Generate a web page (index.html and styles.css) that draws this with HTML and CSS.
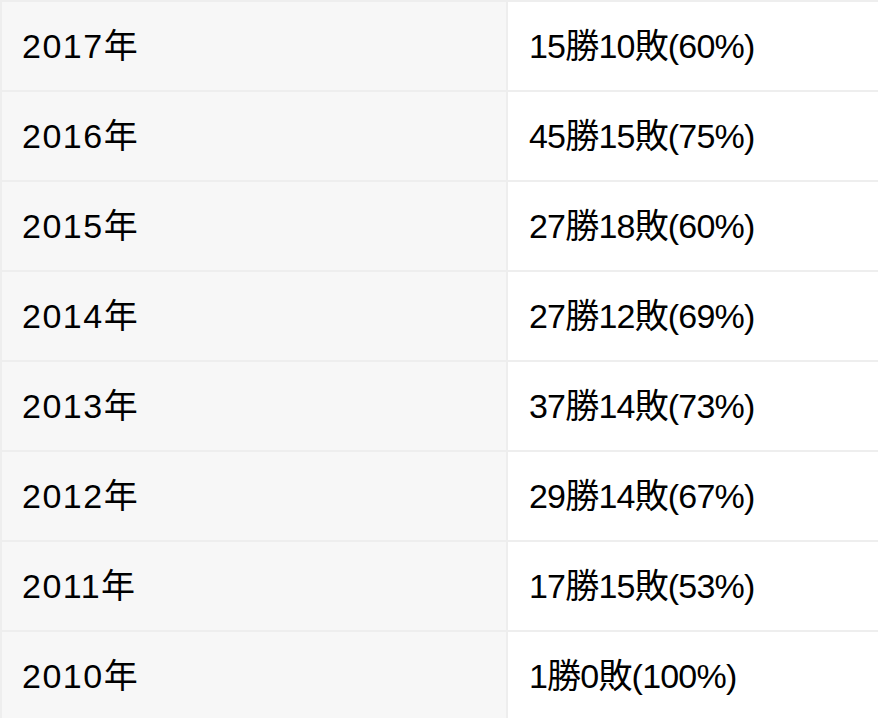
FILE: index.html
```html
<!DOCTYPE html>
<html lang="ja">
<head>
<meta charset="utf-8">
<link rel="stylesheet" href="styles.css">
</head>
<body>
<table class="record">
  <tbody>
    <tr><td class="year">2017年</td><td class="result">15勝10敗(60%)</td></tr>
    <tr><td class="year">2016年</td><td class="result">45勝15敗(75%)</td></tr>
    <tr><td class="year">2015年</td><td class="result">27勝18敗(60%)</td></tr>
    <tr><td class="year">2014年</td><td class="result">27勝12敗(69%)</td></tr>
    <tr><td class="year">2013年</td><td class="result">37勝14敗(73%)</td></tr>
    <tr><td class="year">2012年</td><td class="result">29勝14敗(67%)</td></tr>
    <tr><td class="year">2011年</td><td class="result">17勝15敗(53%)</td></tr>
    <tr><td class="year">2010年</td><td class="result">1勝0敗(100%)</td></tr>
  </tbody>
</table>
</body>
</html>
```

FILE: styles.css
```css
html, body {
  margin: 0;
  padding: 0;
  background: #ffffff;
  overflow: hidden;
}

.record {
  width: 880px;
  border-collapse: separate;
  border-spacing: 2px;
  background: #eeeeee;
  font-family: "Liberation Sans", "Noto Sans CJK JP", sans-serif;
  font-size: 34px;
  color: #000000;
  table-layout: fixed;
}

.record td {
  height: 88px;
  padding: 0;
  vertical-align: middle;
  line-height: 40px;
  white-space: nowrap;
}

.year {
  width: 484px;
  padding-left: 20px !important;
  background: #f7f7f7;
  letter-spacing: 1.5px;
}

.result {
  padding-left: 21px !important;
  background: #ffffff;
  letter-spacing: -0.8px;
}
```
